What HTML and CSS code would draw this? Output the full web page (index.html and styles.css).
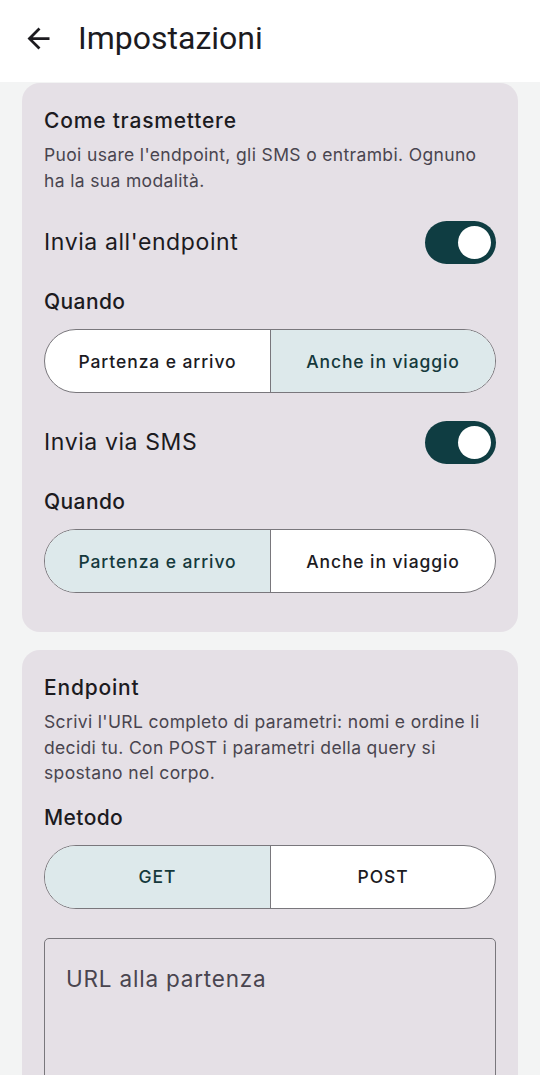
FILE: index.html
```html
<!DOCTYPE html>
<html lang="it">
<head>
<meta charset="utf-8">
<title>Impostazioni</title>
<link rel="stylesheet" href="styles.css">
</head>
<body>
<header class="topbar">
  <svg class="back" viewBox="0 0 24 24" width="33" height="33" aria-hidden="true"><path d="M20 11H7.83l5.59-5.59L12 4l-8 8 8 8 1.41-1.41L7.83 13H20v-2z"/></svg>
  <h1 class="title">Impostazioni</h1>
</header>
<main class="content">
  <section class="card card-first">
    <h2 class="card-title">Come trasmettere</h2>
    <p class="card-desc">Puoi usare l'endpoint, gli SMS o entrambi. Ognuno ha la sua modalità.</p>

    <div class="switch-row">
      <span class="switch-label">Invia all'endpoint</span>
      <span class="switch on"><span class="thumb"></span></span>
    </div>
    <div class="field-label">Quando</div>
    <div class="segmented">
      <div class="seg">Partenza e arrivo</div>
      <div class="seg selected">Anche in viaggio</div>
    </div>

    <div class="switch-row">
      <span class="switch-label">Invia via SMS</span>
      <span class="switch on"><span class="thumb"></span></span>
    </div>
    <div class="field-label">Quando</div>
    <div class="segmented">
      <div class="seg selected">Partenza e arrivo</div>
      <div class="seg">Anche in viaggio</div>
    </div>
  </section>

  <section class="card card-second">
    <h2 class="card-title">Endpoint</h2>
    <p class="card-desc">Scrivi l'URL completo di parametri: nomi e ordine li decidi tu. Con POST i parametri della query si spostano nel corpo.</p>
    <div class="field-label method-label">Metodo</div>
    <div class="segmented">
      <div class="seg selected">GET</div>
      <div class="seg">POST</div>
    </div>
    <div class="textfield">
      <span class="placeholder">URL alla partenza</span>
    </div>
  </section>
</main>
</body>
</html>
```
FILE: styles.css
```css
* { box-sizing: border-box; }
html, body { margin: 0; padding: 0; }
body {
  background: #f3f4f4;
  font-family: Inter, "Noto Sans", "Liberation Sans", sans-serif;
  color: #1c1b1f;
  height: 1075px;
  overflow: hidden;
}
.topbar {
  height: 82px;
  background: #ffffff;
  display: flex;
  align-items: center;
  padding-left: 22px;
}
.back { fill: #1c1b1f; display: block; margin-top: -5px; }
.title {
  margin: -6px 0 0 23px;
  font-family: Roboto, "Noto Sans", sans-serif;
  font-size: 32px;
  font-weight: 400;
  letter-spacing: 0;
  color: #1c1b1f;
}
.content {
  padding: 1px 22px 0 22px;
}
.card {
  background: #e5e0e6;
  border-radius: 18px;
  padding: 22px 22px 39px 22px;
}
.card-second {
  margin-top: 18px;
  padding-bottom: 0;
  border-bottom-left-radius: 0;
  border-bottom-right-radius: 0;
}
.card-title {
  margin: 0;
  font-size: 21px;
  font-weight: 500;
  line-height: 32px;
  letter-spacing: 0.8px;
  color: #1c1b1f;
}
.card-desc {
  margin: 5px 0 0 0;
  font-size: 17.5px;
  line-height: 25.5px;
  letter-spacing: 0.35px;
  color: #49454f;
}
.switch-row {
  display: flex;
  align-items: center;
  justify-content: space-between;
  margin-top: 27px;
  height: 44px;
}
.switch-label {
  font-size: 23px;
  letter-spacing: 0.6px;
  color: #1c1b1f;
}
.switch {
  width: 71px;
  height: 43px;
  border-radius: 22px;
  background: #0f3d42;
  display: flex;
  align-items: center;
  justify-content: flex-end;
  padding-right: 5px;
}
.thumb {
  width: 33px;
  height: 33px;
  border-radius: 50%;
  background: #ffffff;
}
.field-label {
  margin-top: 24px;
  font-size: 21px;
  font-weight: 500;
  line-height: 28px;
  letter-spacing: 0.4px;
  color: #1c1b1f;
}
.method-label { margin-top: 18px; }
.segmented {
  margin-top: 13px;
  height: 64px;
  display: grid;
  grid-template-columns: 1fr 1fr;
  border: 1.4px solid #79777c;
  border-radius: 32px;
  overflow: hidden;
  background: #ffffff;
}
.seg {
  display: flex;
  align-items: center;
  justify-content: center;
  font-size: 17.5px;
  font-weight: 500;
  letter-spacing: 0.9px;
  color: #1c1b1f;
}
.seg + .seg { border-left: 1.4px solid #79777c; }
.seg.selected {
  background: #dde9eb;
  color: #15393c;
}
.textfield {
  margin-top: 29px;
  height: 160px;
  border: 1.4px solid #79777c;
  border-radius: 5px;
  padding: 26px 21px;
}
.placeholder {
  font-size: 22.5px;
  letter-spacing: 0.8px;
  color: #49454f;
}
```
